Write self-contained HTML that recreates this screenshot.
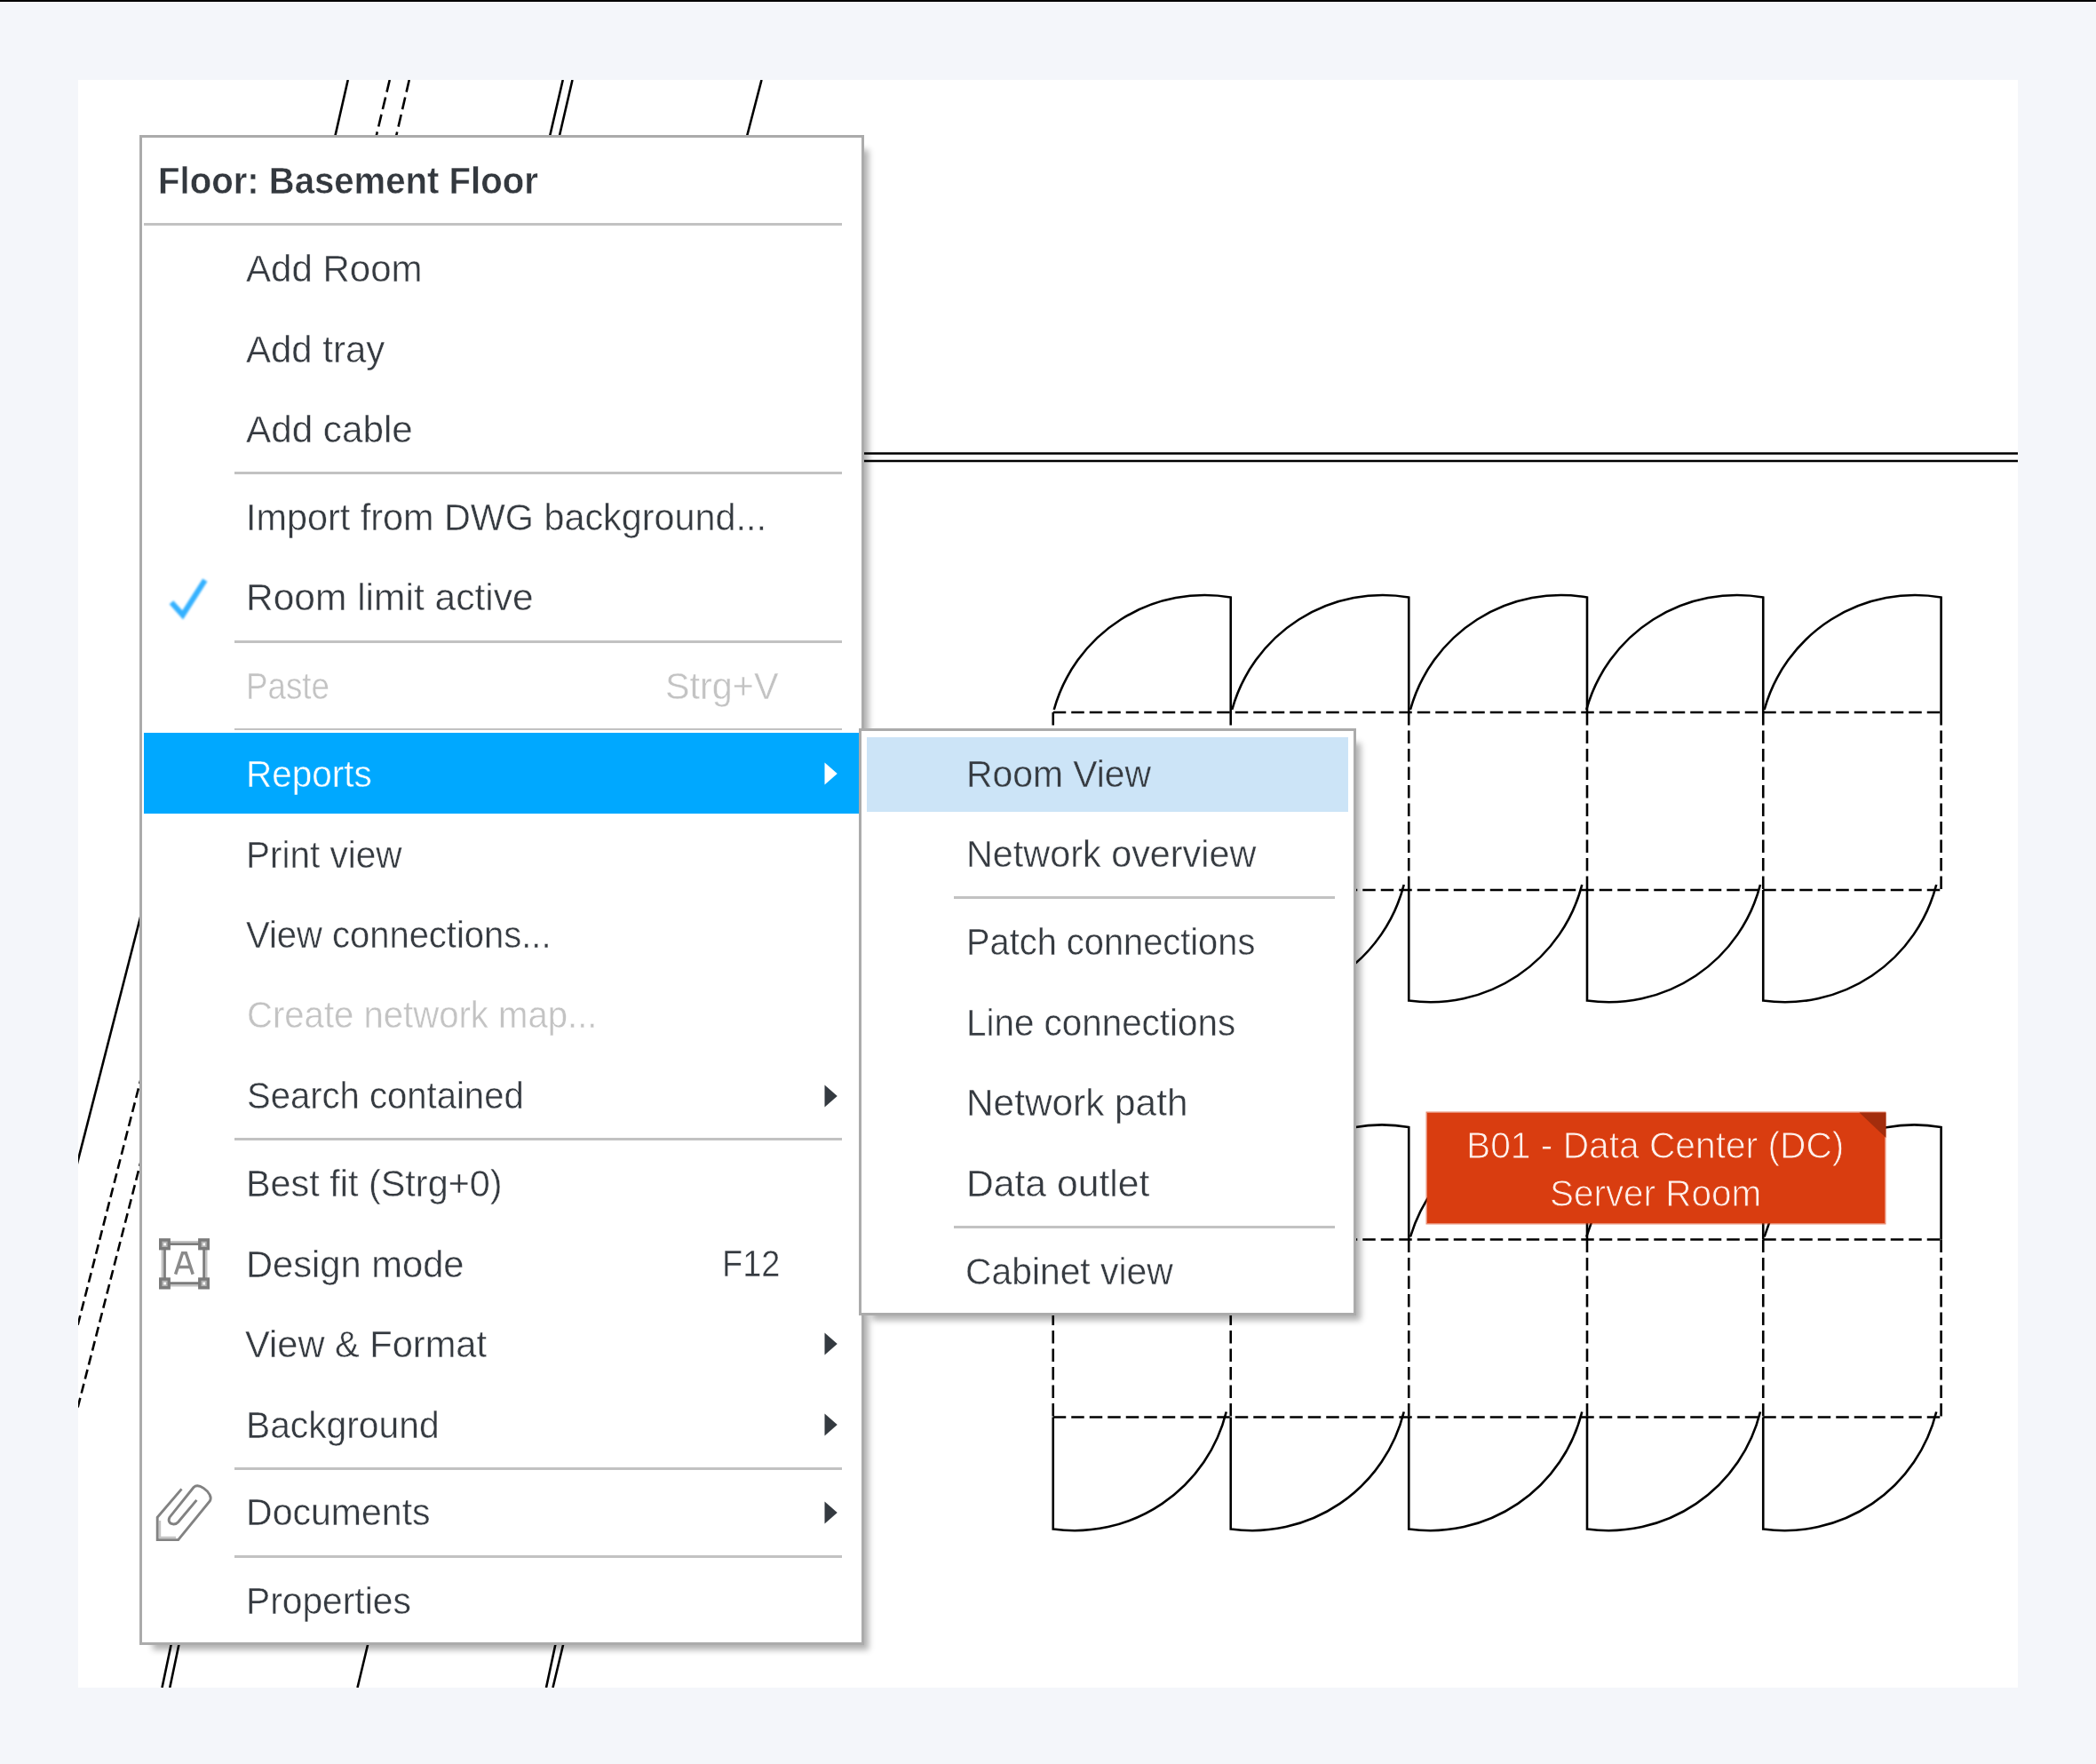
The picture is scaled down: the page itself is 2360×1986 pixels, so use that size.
<!DOCTYPE html>
<html><head><meta charset="utf-8"><title>Floor context menu</title>
<style>
html,body{margin:0;padding:0}
body{width:2360px;height:1986px;background:#f4f6fa;position:relative;overflow:hidden;font-family:"Liberation Sans",sans-serif}
.abs{position:absolute}
.t{position:absolute;white-space:nowrap;line-height:60px;height:60px;transform-origin:0 0;font-family:"Liberation Sans",sans-serif}
.t{-webkit-text-stroke:.45px #fff;filter:blur(.55px)}
.sep{position:absolute;height:2.8px;background:#c2c2c2}
#panel{position:absolute;left:88px;top:90px;width:2184px;height:1810px;background:#fff}
#menu{position:absolute;left:157px;top:152px;width:816px;height:1700px;box-sizing:border-box;border:3px solid #ababab;background:#fff;box-shadow:10px 10.5px 7px -5px rgba(0,0,0,.31)}
#sub{position:absolute;left:967px;top:820px;width:560px;height:661px;box-sizing:border-box;border:3px solid #ababab;background:#fff;box-shadow:10px 10.5px 7px -5px rgba(0,0,0,.31)}
</style></head><body>
<div class="abs" style="left:0;top:0;width:2360px;height:2px;background:#000"></div>
<div id="panel"></div>

<svg class="abs" style="left:0;top:0" width="2360" height="1986" viewBox="0 0 2360 1986" fill="none" stroke="#000" stroke-width="2.6" shape-rendering="geometricPrecision">
<defs><clipPath id="cp"><rect x="88" y="90" width="2184" height="1810"/></clipPath></defs><g clip-path="url(#cp)">
<path d="M391.75 90L377.5 152.5M633.75 90L619.25 152.5M644.5 90L630 152.5M857.5 90L841.25 152.5"/>
<path d="M438.75 90L423 156M460.75 90L446.25 152.5" stroke-dasharray="14 6"/>
<path d="M193 1850L182.5 1900M201.75 1850L191.25 1900M414.5 1850L402.5 1900M625.7 1850L615 1900M634.5 1850L622.5 1900"/>
<path d="M160 1025.05L86 1313.65"/>
<path d="M160 1209.35L86 1497.95M160 1302.15L86 1590.75" stroke-dasharray="11 5.5"/>
<path d="M960 510.5H2272M960 519H2272"/>
<path d="M1185.75 802H2185.6M1185.75 1002H2185.6" stroke-dasharray="14.5 6"/>
<path d="M1185.75 802V1002M1385.75 802V1002M1586.25 802V1002M1787.0 802V1002M1985.25 802V1002M2185.6 802V1002" stroke-dasharray="14.5 6"/>
<path d="M1385.75 802V672.5A176 176 0 0 0 1186.75 799"/>
<path d="M1586.25 802V672.5A176 176 0 0 0 1387.25 799"/>
<path d="M1787.0 802V672.5A176 176 0 0 0 1588.0 799"/>
<path d="M1985.25 802V672.5A176 176 0 0 0 1786.25 799"/>
<path d="M2185.6 802V672.5A176 176 0 0 0 1986.6 799"/>
<path d="M1185.75 1002V1126.5A176 176 0 0 0 1380.75 996"/>
<path d="M1385.75 1002V1126.5A176 176 0 0 0 1580.75 996"/>
<path d="M1586.25 1002V1126.5A176 176 0 0 0 1781.25 996"/>
<path d="M1787.0 1002V1126.5A176 176 0 0 0 1982.0 996"/>
<path d="M1985.25 1002V1126.5A176 176 0 0 0 2180.25 996"/>
<path d="M1185.75 1395.5H2185.6M1185.75 1595.5H2185.6" stroke-dasharray="14.5 6"/>
<path d="M1185.75 1395.5V1595.5M1385.75 1395.5V1595.5M1586.25 1395.5V1595.5M1787.0 1395.5V1595.5M1985.25 1395.5V1595.5M2185.6 1395.5V1595.5" stroke-dasharray="14.5 6"/>
<path d="M1385.75 1395.5V1269.0A176 176 0 0 0 1186.75 1392.5"/>
<path d="M1586.25 1395.5V1269.0A176 176 0 0 0 1387.25 1392.5"/>
<path d="M1787.0 1395.5V1269.0A176 176 0 0 0 1588.0 1392.5"/>
<path d="M1985.25 1395.5V1269.0A176 176 0 0 0 1786.25 1392.5"/>
<path d="M2185.6 1395.5V1269.0A176 176 0 0 0 1986.6 1392.5"/>
<path d="M1185.75 1595.5V1721.5A176 176 0 0 0 1380.75 1589.5"/>
<path d="M1385.75 1595.5V1721.5A176 176 0 0 0 1580.75 1589.5"/>
<path d="M1586.25 1595.5V1721.5A176 176 0 0 0 1781.25 1589.5"/>
<path d="M1787.0 1595.5V1721.5A176 176 0 0 0 1982.0 1589.5"/>
<path d="M1985.25 1595.5V1721.5A176 176 0 0 0 2180.25 1589.5"/>
</g></svg>
<div class="abs" style="left:1606.5px;top:1252.5px;width:515.5px;height:124.5px;background:#d93d10;box-shadow:0 0 0 1.5px rgba(217,61,16,.6)"></div>
<svg class="abs" style="left:2090px;top:1251px" width="34" height="32" viewBox="0 0 34 32"><path d="M3.5 1.5H33.5V30Z" fill="#a32d0d"/></svg>
<div class="t " style="left:1650.70px;top:1258.84px;font-size:42.6px;color:#fff1ec;-webkit-text-stroke:.9px #d93d10;transform:scaleX(0.9560)">B01 - Data Center (DC)</div>
<div class="t " style="left:1745.00px;top:1313.34px;font-size:42.6px;color:#fff1ec;-webkit-text-stroke:.9px #d93d10;transform:scaleX(0.9491)">Server Room</div>
<div id="menu"></div>
<div class="sep" style="left:162px;top:251.1px;width:786px"></div>
<div class="sep" style="left:264px;top:531.1px;width:684px"></div>
<div class="sep" style="left:264px;top:720.9px;width:684px"></div>
<div class="sep" style="left:264px;top:819.6px;width:684px"></div>
<div class="sep" style="left:264px;top:1281.1px;width:684px"></div>
<div class="sep" style="left:264px;top:1652.1px;width:684px"></div>
<div class="sep" style="left:264px;top:1750.9px;width:684px"></div>
<div class="abs" style="left:162px;top:825.2px;width:805.5px;height:90.8px;background:#00a8ff"></div>
<div class="t " style="left:177.51px;top:172.60px;font-size:43px;color:#33383e;font-weight:bold;transform:scaleX(0.9327)">Floor: Basement Floor</div>
<div class="t " style="left:277.25px;top:271.85px;font-size:43px;color:#353a40;transform:scaleX(0.9773)">Add Room</div>
<div class="t " style="left:277.38px;top:362.60px;font-size:43px;color:#353a40;transform:scaleX(0.9757)">Add tray</div>
<div class="t " style="left:277.22px;top:453.10px;font-size:43px;color:#353a40;transform:scaleX(0.9820)">Add cable</div>
<div class="t " style="left:276.96px;top:551.60px;font-size:43px;color:#353a40;transform:scaleX(0.9617)">Import from DWG background...</div>
<div class="t " style="left:276.70px;top:642.35px;font-size:43px;color:#353a40;transform:scaleX(0.9884)">Room limit active</div>
<div class="t " style="left:277.09px;top:741.85px;font-size:43px;color:#c3c3c3;transform:scaleX(0.8543)">Paste</div>
<div class="t " style="left:748.89px;top:741.85px;font-size:43px;color:#c3c3c3;transform:scaleX(0.9610)">Strg+V</div>
<div class="t " style="left:276.57px;top:841.10px;font-size:43px;color:#ffffff;-webkit-text-stroke-color:#00a8ff;transform:scaleX(0.9411)">Reports</div>
<div class="t " style="left:277.37px;top:931.60px;font-size:43px;color:#353a40;transform:scaleX(0.9423)">Print view</div>
<div class="t " style="left:276.56px;top:1022.10px;font-size:43px;color:#353a40;transform:scaleX(0.9293)">View connections...</div>
<div class="t " style="left:278.01px;top:1112.10px;font-size:43px;color:#c3c3c3;transform:scaleX(0.9324)">Create network map...</div>
<div class="t " style="left:278.09px;top:1203.35px;font-size:43px;color:#353a40;transform:scaleX(0.9313)">Search contained</div>
<div class="t " style="left:277.26px;top:1302.10px;font-size:43px;color:#353a40;transform:scaleX(0.9623)">Best fit (Strg+0)</div>
<div class="t " style="left:276.73px;top:1392.60px;font-size:43px;color:#353a40;transform:scaleX(0.9689)">Design mode</div>
<div class="t " style="left:812.65px;top:1392.35px;font-size:43px;color:#353a40;transform:scaleX(0.8806)">F12</div>
<div class="t " style="left:276.42px;top:1483.10px;font-size:43px;color:#353a40;transform:scaleX(0.9675)">View &amp; Format</div>
<div class="t " style="left:277.09px;top:1573.60px;font-size:43px;color:#353a40;transform:scaleX(0.9480)">Background</div>
<div class="t " style="left:276.60px;top:1671.85px;font-size:43px;color:#353a40;transform:scaleX(0.9545)">Documents</div>
<div class="t " style="left:276.97px;top:1771.85px;font-size:43px;color:#353a40;transform:scaleX(0.9479)">Properties</div>
<svg class="abs" style="left:926px;top:854.5px" width="20" height="32" viewBox="0 0 20 32"><path d="M2.5 3.5V28.5L16.75 16Z" fill="#fff"/></svg>
<svg class="abs" style="left:926px;top:1217.5px" width="20" height="32" viewBox="0 0 20 32"><path d="M2.5 3.5V28.5L16.75 16Z" fill="#343a40"/></svg>
<svg class="abs" style="left:926px;top:1497.3px" width="20" height="32" viewBox="0 0 20 32"><path d="M2.5 3.5V28.5L16.75 16Z" fill="#343a40"/></svg>
<svg class="abs" style="left:926px;top:1588px" width="20" height="32" viewBox="0 0 20 32"><path d="M2.5 3.5V28.5L16.75 16Z" fill="#343a40"/></svg>
<svg class="abs" style="left:926px;top:1687.1px" width="20" height="32" viewBox="0 0 20 32"><path d="M2.5 3.5V28.5L16.75 16Z" fill="#343a40"/></svg>
<svg class="abs" style="left:180px;top:640px;filter:blur(1.25px)" width="70" height="70" viewBox="180 640 70 70"><path d="M193 678.3L205.7 692.4L230.8 653.2" fill="none" stroke="#1fa8ff" stroke-width="6.2" opacity=".9"/></svg>
<svg class="abs" style="left:170px;top:1386px" width="76" height="74" viewBox="170 1386 76 74" fill="none">
<g fill="#c2c2c2"><rect x="190" y="1397" width="34" height="2.4"/><rect x="190" y="1445.9" width="34" height="2.6"/><rect x="181.6" y="1406" width="2.7" height="33"/><rect x="230.8" y="1406" width="2.7" height="33"/></g>
<path d="M185.5 1400.6H229.6V1444.7H185.5Z" stroke="#7b7b7b" stroke-width="2.7"/>
<g fill="#7b7b7b"><rect x="179" y="1394.2" width="12.9" height="13.2"/><rect x="223.1" y="1394.2" width="12.9" height="13.2"/><rect x="179" y="1438.3" width="12.9" height="13.2"/><rect x="223.1" y="1438.3" width="12.9" height="13.2"/></g>
<g fill="#b4b4b4"><rect x="182.4" y="1397.6" width="6.2" height="6.4"/><rect x="226.5" y="1397.6" width="6.2" height="6.4"/><rect x="182.4" y="1441.7" width="6.2" height="6.4"/><rect x="226.5" y="1441.7" width="6.2" height="6.4"/></g>
<g fill="#fff"><rect x="184.3" y="1399.5" width="2.6" height="2.8"/><rect x="228.4" y="1399.5" width="2.6" height="2.8"/><rect x="184.3" y="1443.6" width="2.6" height="2.8"/><rect x="228.4" y="1443.6" width="2.6" height="2.8"/></g>
<path d="M197.6 1434.6L205.5 1410.8H209.3L217.2 1434.6M200.6 1426.4H214.2" stroke="#8a8a8a" stroke-width="3.5" stroke-linejoin="miter"/>
</svg>
<svg class="abs" style="left:168px;top:1664px" width="78" height="78" viewBox="168 1664 78 78" fill="none" stroke="#828282" stroke-width="2.9" stroke-linejoin="miter">
<path d="M180 1712V1730.9H198" stroke="#c6c6c6" stroke-width="2.4"/>
<path d="M204.5 1676.4L177.2 1708.2V1733.6H200.7L236.3 1689.9C238.6 1686 236 1680 229.1 1675.4C224.5 1672.2 220.5 1672 218 1674.5L191 1708.2C189 1712 190.5 1715.8 195.5 1716C198 1716 199.5 1715 200.5 1713.8L221.4 1688.9"/>
</svg>
<div id="sub"></div>
<div class="abs" style="left:976px;top:830px;width:542px;height:83.8px;background:#cce4f7"></div>
<div class="sep" style="left:1074.25px;top:1009.4px;width:428.25px"></div>
<div class="sep" style="left:1074.25px;top:1380.2px;width:428.25px"></div>
<div class="t " style="left:1087.52px;top:840.85px;font-size:43px;color:#353a40;-webkit-text-stroke-color:#cce4f7;transform:scaleX(0.9498)">Room View</div>
<div class="t " style="left:1087.83px;top:931.35px;font-size:43px;color:#353a40;transform:scaleX(0.9616)">Network overview</div>
<div class="t " style="left:1088.15px;top:1030.10px;font-size:43px;color:#353a40;transform:scaleX(0.9257)">Patch connections</div>
<div class="t " style="left:1088.17px;top:1120.60px;font-size:43px;color:#353a40;transform:scaleX(0.9392)">Line connections</div>
<div class="t " style="left:1088.24px;top:1211.10px;font-size:43px;color:#353a40;transform:scaleX(0.9848)">Network path</div>
<div class="t " style="left:1087.69px;top:1301.60px;font-size:43px;color:#353a40;transform:scaleX(0.9919)">Data outlet</div>
<div class="t " style="left:1086.96px;top:1400.60px;font-size:43px;color:#353a40;transform:scaleX(0.9494)">Cabinet view</div>
</body></html>
